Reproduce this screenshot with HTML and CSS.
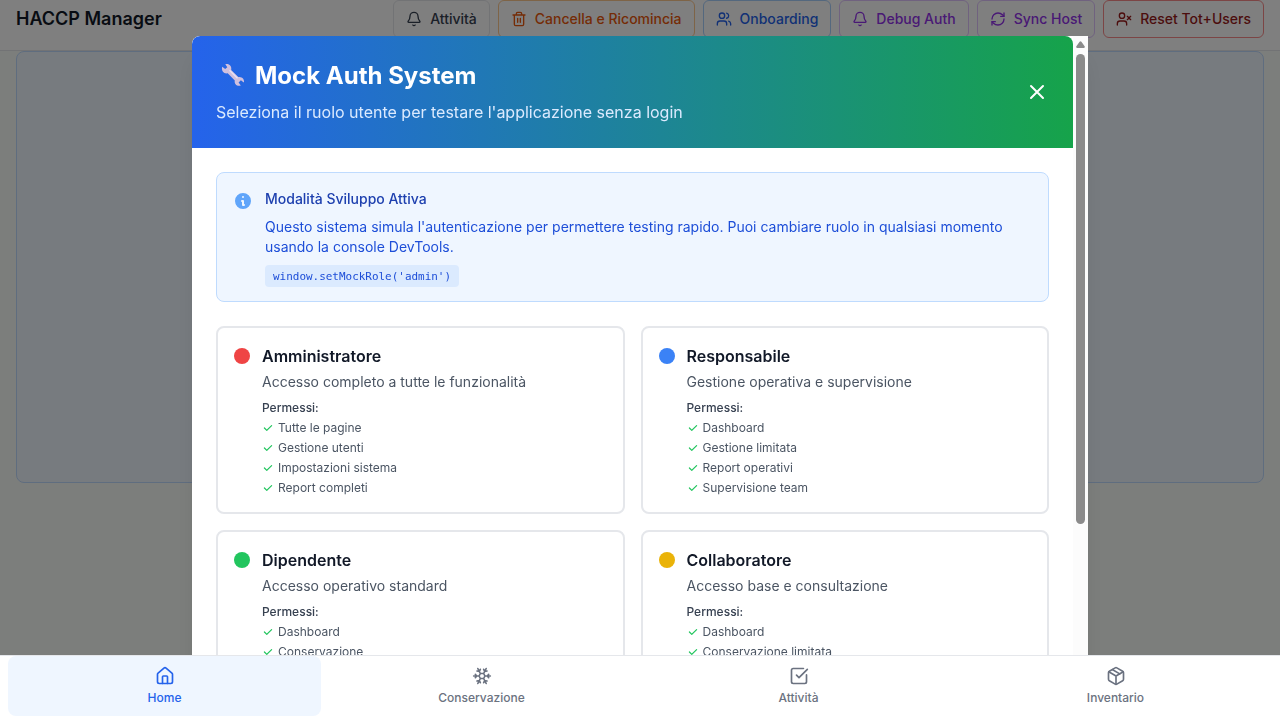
FILE: index.html
```html
<!DOCTYPE html>
<html lang="it">
<head>
<meta charset="utf-8">
<title>HACCP Manager</title>
<link rel="stylesheet" href="styles.css">
</head>
<body>
<header class="topbar">
  <h1 class="brand">HACCP Manager</h1>
  <div class="actions">
    <button class="btn gray"><svg class="i16" viewBox="0 0 24 24"><path d="M10.268 21a2 2 0 0 0 3.464 0"/><path d="M3.262 15.326A1 1 0 0 0 4 17h16a1 1 0 0 0 .74-1.673C19.41 13.956 18 12.499 18 8A6 6 0 0 0 6 8c0 4.499-1.411 5.956-2.738 7.326"/></svg><span>Attività</span></button>
    <button class="btn orange"><svg class="i16" viewBox="0 0 24 24"><path d="M3 6h18M19 6v14c0 1-1 2-2 2H7c-1 0-2-1-2-2V6M8 6V4c0-1 1-2 2-2h4c1 0 2 1 2 2v2M10 11v6M14 11v6"/></svg><span>Cancella e Ricomincia</span></button>
    <button class="btn blue"><svg class="i16" viewBox="0 0 24 24"><path d="M16 21v-2a4 4 0 0 0-4-4H6a4 4 0 0 0-4 4v2"/><circle cx="9" cy="7" r="4"/><path d="M22 21v-2a4 4 0 0 0-3-3.87M16 3.13a4 4 0 0 1 0 7.75"/></svg><span>Onboarding</span></button>
    <button class="btn purple"><svg class="i16" viewBox="0 0 24 24"><path d="M10.268 21a2 2 0 0 0 3.464 0"/><path d="M3.262 15.326A1 1 0 0 0 4 17h16a1 1 0 0 0 .74-1.673C19.41 13.956 18 12.499 18 8A6 6 0 0 0 6 8c0 4.499-1.411 5.956-2.738 7.326"/></svg><span>Debug Auth</span></button>
    <button class="btn purple"><svg class="i16" viewBox="0 0 24 24"><path d="M3 12a9 9 0 0 1 9-9 9.75 9.75 0 0 1 6.74 2.74L21 8"/><path d="M21 3v5h-5M21 12a9 9 0 0 1-9 9 9.75 9.75 0 0 1-6.74-2.74L3 16"/><path d="M8 16H3v5"/></svg><span>Sync Host</span></button>
    <button class="btn red"><svg class="i16" viewBox="0 0 24 24"><path d="M16 21v-2a4 4 0 0 0-4-4H6a4 4 0 0 0-4 4v2"/><circle cx="9" cy="7" r="4"/><path d="M17 8l5 5M22 8l-5 5"/></svg><span>Reset Tot+Users</span></button>
  </div>
</header>
<main class="page"><section class="panel"></section></main>

<div class="overlay">
  <div class="modal">
    <div class="modal-body">
      <div class="modal-head">
        <div>
          <h2 class="modal-title">
            <svg class="wrench" viewBox="0 0 24 24"><path fill="#d0c0de" d="M1.2 3.7 L4.2 6.1 L6.3 4.3 L4.3 1.2 C8 .2 11 3 10.2 6.9 L17.3 14 C21 13.2 24 16.5 22.8 19.6 L19.9 17.3 L17.6 19.4 L19.8 22.6 C16 23.8 13 20.8 13.8 17.4 L6.7 10.3 C3 11.2 0 7.5 1.2 3.7Z"/><path fill="none" stroke="#ebe2f2" stroke-width="1.3" d="M8.5 7.2l8 8"/></svg>
            <span>Mock Auth System</span>
          </h2>
          <p class="modal-sub">Seleziona il ruolo utente per testare l'applicazione senza login</p>
        </div>
        <svg class="close" viewBox="0 0 24 24"><path d="M6 18L18 6M6 6l12 12"/></svg>
      </div>
      <div class="modal-content">
        <div class="info">
          <svg class="info-icon" viewBox="0 0 20 20"><path fill-rule="evenodd" d="M18 10a8 8 0 11-16 0 8 8 0 0116 0zm-7-4a1 1 0 11-2 0 1 1 0 012 0zM9 9a1 1 0 000 2v3a1 1 0 001 1h1a1 1 0 100-2v-3a1 1 0 00-1-1H9z"/></svg>
          <div class="info-text">
            <h3>Modalità Sviluppo Attiva</h3>
            <p>Questo sistema simula l'autenticazione per permettere testing rapido. Puoi cambiare ruolo in qualsiasi momento usando la console DevTools.</p>
            <div class="code-row"><code>window.setMockRole('admin')</code></div>
          </div>
        </div>
        <div class="roles">
          <article class="role"><span class="dot dot-red"></span><div>
            <h3>Amministratore</h3><p>Accesso completo a tutte le funzionalità</p><h4>Permessi:</h4>
            <ul><li>Tutte le pagine</li><li>Gestione utenti</li><li>Impostazioni sistema</li><li>Report completi</li></ul></div></article>
          <article class="role"><span class="dot dot-blue"></span><div>
            <h3>Responsabile</h3><p>Gestione operativa e supervisione</p><h4>Permessi:</h4>
            <ul><li>Dashboard</li><li>Gestione limitata</li><li>Report operativi</li><li>Supervisione team</li></ul></div></article>
          <article class="role"><span class="dot dot-green"></span><div>
            <h3>Dipendente</h3><p>Accesso operativo standard</p><h4>Permessi:</h4>
            <ul><li>Dashboard</li><li>Conservazione</li></ul></div></article>
          <article class="role"><span class="dot dot-yellow"></span><div>
            <h3>Collaboratore</h3><p>Accesso base e consultazione</p><h4>Permessi:</h4>
            <ul><li>Dashboard</li><li>Conservazione limitata</li></ul></div></article>
        </div>
      </div>
    </div>
    <div class="scrollbar"><svg class="arrow" viewBox="0 0 9 7"><path d="M4.5 .2Q5 .2 5.4 .8L8.8 5.6Q9 7 8 7H1Q0 7 .2 5.6L3.6 .8Q4 .2 4.5 .2Z"/></svg><div class="thumb"></div></div>
  </div>
</div>

<nav class="tabs">
  <a class="tab active"><svg class="i20" viewBox="0 0 24 24"><path d="M15 21v-8a1 1 0 0 0-1-1h-4a1 1 0 0 0-1 1v8"/><path d="M3 10a2 2 0 0 1 .709-1.528l7-5.999a2 2 0 0 1 2.582 0l7 5.999A2 2 0 0 1 21 10v9a2 2 0 0 1-2 2H5a2 2 0 0 1-2-2z"/></svg><span>Home</span></a>
  <a class="tab"><svg class="i20" viewBox="0 0 24 24"><path d="m10 20-1.25-2.5L6 18M10 4 8.75 6.5 6 6M14 20l1.25-2.5L18 18M14 4l1.25 2.5L18 6M17 21l-3-6h-4M17 3l-3 6 1.5 3M2 12h6.5L10 9M20 10l-1.5 2 1.5 2M22 12h-6.5L14 15M4 10l1.5 2L4 14M7 21l3-6-1.5-3M7 3l3 6h4"/></svg><span>Conservazione</span></a>
  <a class="tab"><svg class="i20" viewBox="0 0 24 24"><path d="M21 10.656V19a2 2 0 0 1-2 2H5a2 2 0 0 1-2-2V5a2 2 0 0 1 2-2h12.344"/><path d="m9 11 3 3L22 4"/></svg><span>Attività</span></a>
  <a class="tab"><svg class="i20" viewBox="0 0 24 24"><path d="m7.5 4.27 9 5.15"/><path d="M21 8a2 2 0 0 0-1-1.73l-7-4a2 2 0 0 0-2 0l-7 4A2 2 0 0 0 3 8v8a2 2 0 0 0 1 1.73l7 4a2 2 0 0 0 2 0l7-4A2 2 0 0 0 21 16Z"/><path d="m3.3 7 8.7 5 8.7-5M12 22V12"/></svg><span>Inventario</span></a>
</nav>
<script src="checks.js"></script>
</body>
</html>
```
FILE: checks.js
```js
document.querySelectorAll('.role li').forEach(function (li) {
  li.insertAdjacentHTML('afterbegin', '<svg class="check" viewBox="0 0 20 20"><path fill-rule="evenodd" d="M16.707 5.293a1 1 0 010 1.414l-8 8a1 1 0 01-1.414 0l-4-4a1 1 0 011.414-1.414L8 12.586l7.293-7.293a1 1 0 011.414 0z"/></svg>');
});
```
FILE: styles.css
```css
* { box-sizing: border-box; margin: 0; padding: 0; }
body { height: 720px; overflow: hidden; background: #f9fcf9; font-family: Inter, "Liberation Sans", sans-serif; color: #111827; }
svg { flex: none; display: block; }
.i16, .i20, .close { fill: none; stroke: currentColor; stroke-width: 2; stroke-linecap: round; stroke-linejoin: round; }
.i16 { width: 16px; height: 16px; }
.i20 { width: 20px; height: 20px; }

.topbar { display: flex; justify-content: space-between; align-items: flex-start; height: 51px; padding: 0 16px; background: #fff; border-bottom: 1px solid #e5e7eb; }
.brand { font-size: 18px; line-height: 38px; font-weight: 600; }
.actions { display: flex; gap: 8px; }
.btn { display: flex; align-items: center; gap: 8px; height: 38px; padding: 0 12px; background: transparent; border: 1px solid; border-radius: 6px; font: 500 14px/20px Inter, sans-serif; white-space: nowrap; }
.gray { color: #374151; border-color: #e5e7eb; }
.orange { color: #ea580c; border-color: #fdc88f; }
.blue { color: #2563eb; border-color: #a9d0fd; }
.purple { color: #9333ea; border-color: #e0c4fe; }
.red { color: #991b1b; border-color: #f98b8b; }
.page { padding: 0 16px; }
.panel { height: 432px; background: #eff6ff; border: 1px solid #bfdbfe; border-radius: 8px; }

.overlay { position: fixed; inset: 0; display: flex; align-items: center; justify-content: center; background: rgba(0, 0, 0, .5); }
.modal { display: flex; width: 896px; height: 648px; overflow: hidden; background: #fff; border-radius: 8px 0 0 8px; box-shadow: 0 20px 25px -5px rgba(0, 0, 0, .1), 0 8px 10px -6px rgba(0, 0, 0, .1); }
.modal-body { flex: 1; min-width: 0; }
.modal-head { display: flex; justify-content: space-between; align-items: center; padding: 24px; border-radius: 8px 8px 0 0; background: linear-gradient(to right, #2563eb, #16a34a); color: #fff; }
.modal-title { display: flex; align-items: center; font-size: 24px; line-height: 32px; font-weight: 700; }
.wrench { width: 24px; height: 24px; margin: 0 10px 2px 5px; }
.modal-sub { margin-top: 8px; font-size: 16px; line-height: 24px; color: #dbeafe; }
.close { width: 24px; height: 24px; }
.modal-content { padding: 24px; }
.info { display: flex; gap: 12px; padding: 16px; height: 130px; background: #eff6ff; border: 1px solid #bfdbfe; border-radius: 8px; }
.info-icon { width: 20px; height: 20px; margin-top: 2px; fill: #60a5fa; }
.info-text { font-size: 14px; line-height: 20px; color: #1d4ed8; }
.info-text h3 { font-size: 14px; font-weight: 500; color: #1e40af; margin-bottom: 8px; }
.code-row { display: flex; margin-top: 8px; }
code { padding: 1px 8px 0; height: 22px; line-height: 22px; font-family: "DejaVu Sans Mono", monospace; font-size: 10.96px; background: #dbeafe; border-radius: 4px; }
.roles { display: grid; grid-template-columns: 1fr 1fr; gap: 16px; margin-top: 24px; }
.role { display: flex; gap: 12px; height: 188px; padding: 16px; border: 2px solid #e5e7eb; border-radius: 8px; }
.dot { flex: none; width: 16px; height: 16px; margin-top: 4px; border-radius: 50%; }
.dot-red { background: #ef4444; }
.dot-blue { background: #3b82f6; }
.dot-green { background: #22c55e; }
.dot-yellow { background: #eab308; }
.role h3 { font-size: 16px; line-height: 24px; font-weight: 600; }
.role p { margin-top: 4px; font-size: 14px; line-height: 20px; color: #4b5563; }
.role h4 { margin-top: 8px; font-size: 12px; line-height: 16px; font-weight: 500; color: #374151; }
.role ul { list-style: none; display: grid; gap: 4px; margin-top: 4px; }
.role li { display: flex; align-items: center; gap: 4px; font-size: 12px; line-height: 16px; color: #4b5563; }
.check { width: 12px; height: 12px; fill: #22c55e; }
.scrollbar { display: flex; flex-direction: column; align-items: center; width: 15px; padding-top: 5px; background: #fcfcfc; }
.arrow { width: 9px; height: 7px; fill: #8b8b8b; }
.thumb { width: 9px; height: 470px; margin-top: 6px; border-radius: 5px; background: #8b8b8b; }

.tabs { position: fixed; left: 0; right: 0; bottom: 0; display: grid; grid-template-columns: repeat(4, 1fr); gap: 4px; height: 65px; padding: 0 8px 4px; background: #fff; border-top: 1px solid #e5e7eb; }
.tab { display: flex; flex-direction: column; align-items: center; gap: 4px; padding-top: 10px; border-radius: 8px; font-size: 12px; line-height: 16px; font-weight: 500; color: #6b7280; }
.tab.active { color: #2563eb; background: #eff6ff; }
```
